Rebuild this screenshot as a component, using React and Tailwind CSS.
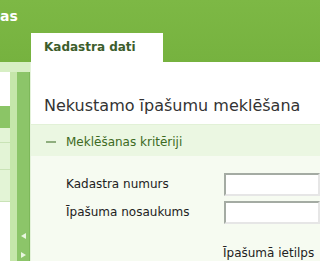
// App.jsx
// Kadastra dati – property search screen (cropped view)

import React from 'react';

function Splitter() {
  return (
    <div className="flex w-[13px] flex-col items-center justify-end border-r border-[#7db85a] bg-[#8cc569] pb-[3px]">
      <svg width="5" height="6" viewBox="0 0 5 6" className="mb-[13px]">
        <polygon points="5,0 5,6 0,3" fill="#e9f6df" />
      </svg>
      <svg width="5" height="6" viewBox="0 0 5 6">
        <polygon points="0,0 0,6 5,3" fill="#e9f6df" />
      </svg>
    </div>
  );
}

function SidePanel() {
  // narrow collapsed list at the far left
  return (
    <div className="flex w-[10px] shrink-0 flex-col">
      <div className="h-[34px] shrink-0 bg-white" />
      <div className="h-[22px] shrink-0 bg-[#8bc566]" />
      <div className="h-[15px] shrink-0 border-b border-[#c9e3b6] bg-[#e3f4d6]" />
      <div className="h-[27px] shrink-0 border-b border-[#c9e3b6] bg-[#e3f4d6]" />
      <div className="h-[32px] shrink-0 border-b border-[#c9e3b6] bg-[#e3f4d6]" />
      <div className="flex-1 bg-white" />
    </div>
  );
}

function FormRow({ label }) {
  return (
    <div className="flex h-[23px] shrink-0 items-center">
      <span className="w-[158px] text-[12px] leading-[15px] text-[#222]">{label}</span>
      <div className="h-[23px] flex-1 border-2 border-t-[#a4aba3] border-l-[#a4aba3] border-r-[#e6e6e6] border-b-[#e6e6e6] bg-white" />
    </div>
  );
}

export default function App() {
  return (
    <div
      className="flex h-[261px] w-[320px] flex-col overflow-hidden bg-white"
      style={{ fontFamily: '"DejaVu Sans", Verdana, sans-serif' }}
    >
      {/* top green bar with tab */}
      <div className="flex h-[62px] shrink-0 flex-col bg-gradient-to-b from-[#7db845] to-[#76b23f]">
        <div className="flex h-[33px] items-center">
          <span className="-mt-[2px] text-[14px] font-bold leading-none text-white">as</span>
        </div>
        <div className="flex flex-1 pl-[31px]">
          <div className="flex w-[132px] items-center bg-white pl-[13px]">
            <span className="text-[12px] font-bold leading-[15px] text-[#3d5d2c]">Kadastra dati</span>
          </div>
        </div>
      </div>

      <div className="flex min-h-0 flex-1">
        {/* left collapsed area */}
        <div className="flex w-[30px] shrink-0 flex-col">
          <div className="h-[10px] shrink-0 bg-[#d7efc4]" />
          <div className="flex flex-1">
            <SidePanel />
            <div className="w-[7px] bg-[#c5e6aa]" />
            <Splitter />
          </div>
        </div>

        {/* main content */}
        <div className="flex flex-1 flex-col border-l border-[#e4f2da]">
          <div className="h-[62px] shrink-0 pl-[13px] pt-[34px]">
            <h1 className="text-[16px] leading-[19px] text-[#333]">Nekustamo īpašumu meklēšana</h1>
          </div>

          <div className="flex h-[32px] shrink-0 items-center border-t border-[#e2f1d7] bg-[#ebf7e2] pl-[15px] pt-[3px]">
            <span className="h-[2px] w-[10px] bg-[#8fae7e]" />
            <span className="ml-[10px] text-[12px] leading-[15px] text-[#3d6a22]">Meklēšanas kritēriji</span>
          </div>

          <div className="flex flex-1 flex-col gap-[5px] bg-[#f6fbf1] pl-[35px] pt-[17px]">
            <FormRow label="Kadastra numurs" />
            <FormRow label="Īpašuma nosaukums" />
            <div className="mt-[17px] whitespace-nowrap pl-[157px] text-[12px] leading-[15px] text-[#222]">Īpašumā ietilps</div>
          </div>
        </div>
      </div>
    </div>
  );
}
